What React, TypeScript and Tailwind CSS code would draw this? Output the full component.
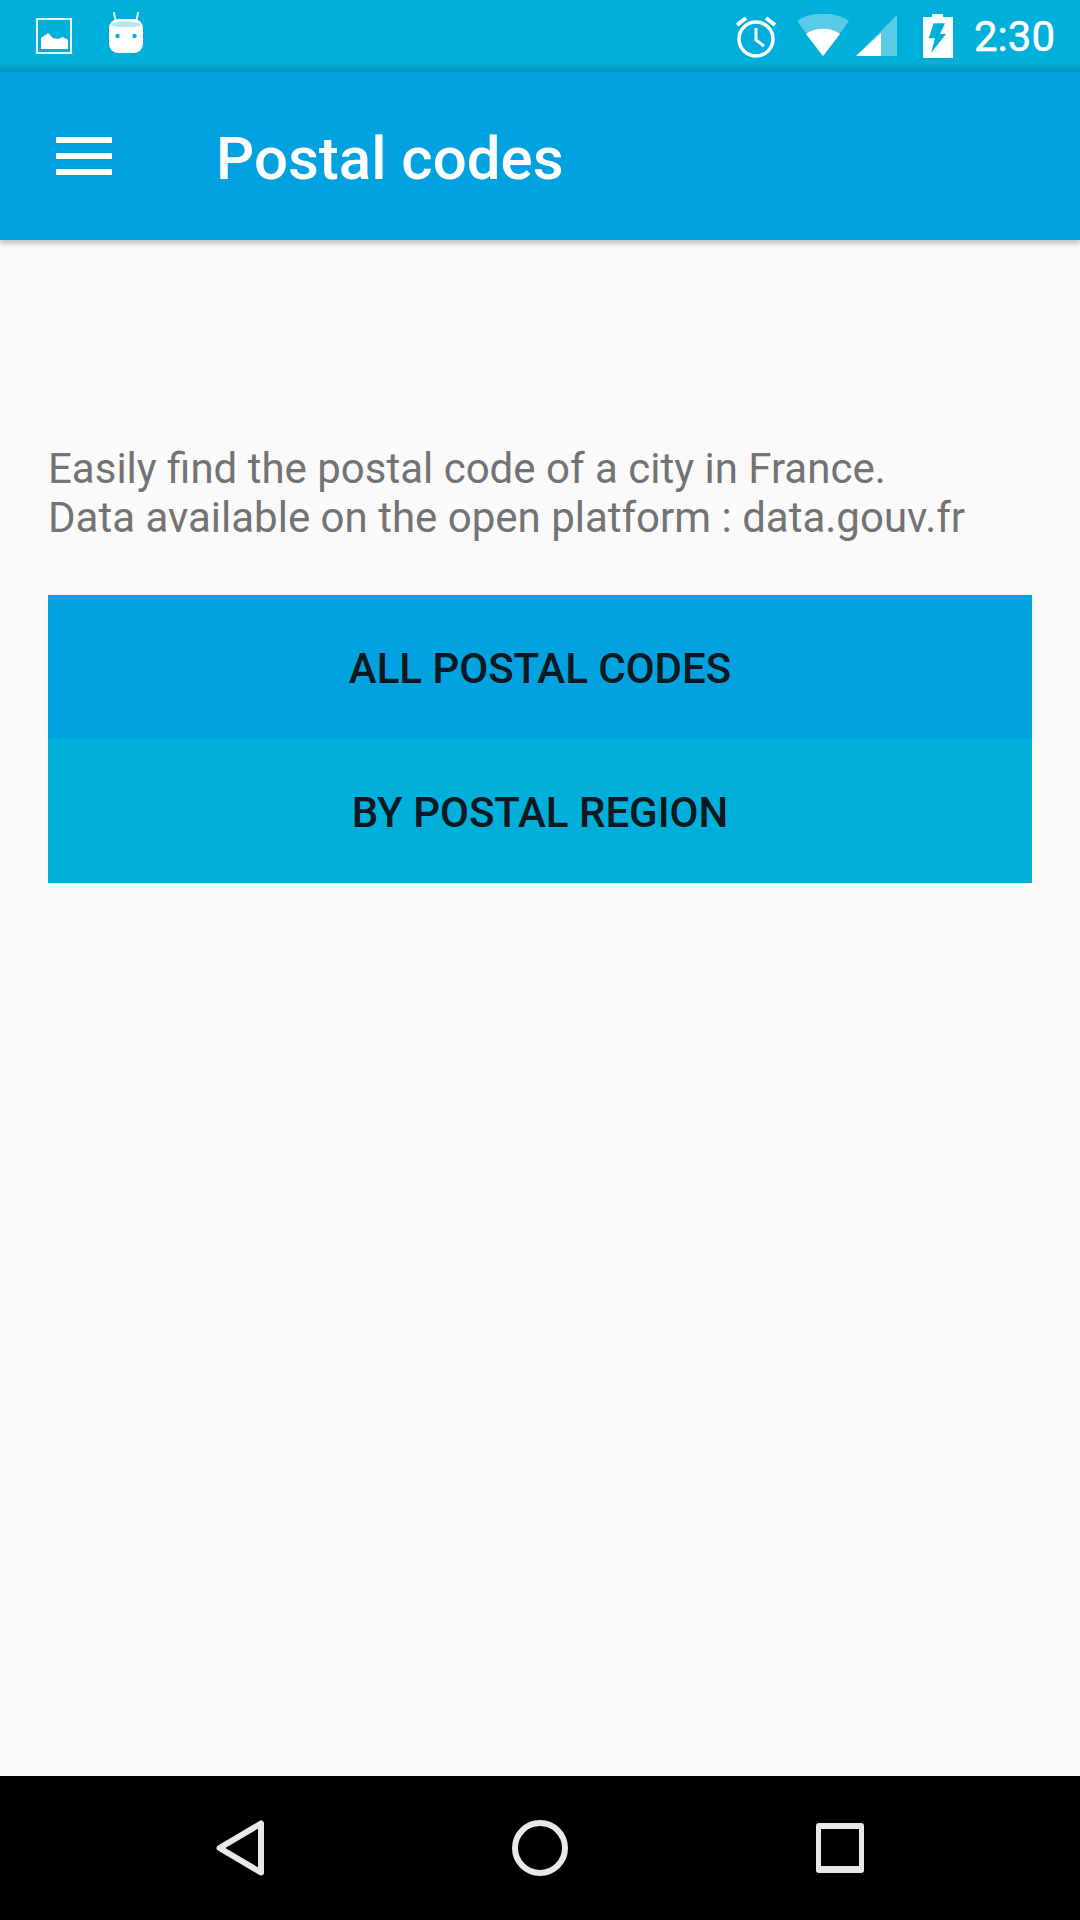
const roboto = "font-['Roboto',sans-serif]";

const StatusBar = () => (
  <div className="relative h-[72px] shrink-0 bg-[#00afda]">
    <div className="flex h-[72px] items-center justify-between pl-[36px] pr-[25px]">
      <div className="flex items-center gap-[36px]">
        <svg width="36" height="36" viewBox="0 0 36 36" fill="none">
          <rect x="1" y="1" width="34" height="34" stroke="#fff" strokeWidth="2" opacity="0.9" />
          <path d="M5 31V20l7-5 5 5 5 1 5-2 5 3v9z" fill="#fff" />
        </svg>
        <svg width="36" height="42" viewBox="0 0 36 42" className="-mt-[6px]">
          <path d="M8 10 6 1M28 10l2-9" stroke="#dff3f8" strokeWidth="2" strokeLinecap="round" />
          <rect x="1" y="7" width="34" height="34" rx="9" fill="#fff" />
          <path d="M3 13c3-5 27-5 30 0-4 3-26 3-30 0z" fill="#b7e6f2" />
          <circle cx="9.500" cy="24" r="2.200" fill="#00afda" />
          <circle cx="26.500" cy="24" r="2.200" fill="#00afda" />
        </svg>
      </div>
      <div className="flex items-center">
        <svg width="44" height="44" viewBox="0 0 44 44" fill="none" stroke="#fff" className="mr-[19px]">
          <circle cx="22" cy="25" r="17" strokeWidth="3.500" />
          <path d="M22 14v12l8 6" strokeWidth="3" />
          <path d="M3 11 12 4M41 11l-9-7" strokeWidth="4" />
        </svg>
        <svg width="102" height="44" viewBox="0 0 102 44" className="mr-[24px]">
          <path d="M0 7C14-3 38-3 52 7L26 42z" fill="#fff" fillOpacity="0.35" />
          <path d="M9 20c9-7 25-7 34 0L26 42z" fill="#fff" />
          <path d="M59 42 100 1v41z" fill="#fff" fillOpacity="0.35" />
          <path d="M59 42 84 19v23z" fill="#fff" />
        </svg>
        <svg width="30" height="44" viewBox="0 0 30 44" className="mr-[21px]">
          <path d="M9 0h11v3h10v41H0V3h9z" fill="#fff" />
          <path d="M10.700 9.300H22L17 20h6L8 39l4-14.700H5.700z" fill="#00afda" />
        </svg>
        <span className={`${roboto} pt-[1px] text-[42px] leading-[44px] text-white [-webkit-text-stroke:0.5px_white]`}>2:30</span>
      </div>
    </div>
    <div className="absolute inset-x-0 bottom-0 h-[9px] bg-gradient-to-b from-transparent to-black/15" />
  </div>
);

const Toolbar = () => (
  <div className="flex h-[168px] shrink-0 items-center bg-[#02a1df] pl-[56px] shadow-[0_3px_6px_rgba(0,0,0,0.25)]">
    <div className="flex w-[160px] flex-col gap-[10px]">
      <div className="h-[6px] w-[56px] bg-white" />
      <div className="h-[6px] w-[56px] bg-white" />
      <div className="h-[6px] w-[56px] bg-white" />
    </div>
    <span className={`${roboto} pt-[5px] text-[60px] leading-none font-medium text-white`}>Postal codes</span>
  </div>
);

const NavBar = () => (
  <div className="flex h-[144px] shrink-0 items-center justify-center bg-black">
    <div className="flex w-[648px] items-center justify-between">
      <svg width="48" height="56" viewBox="0 0 48 56" fill="none" stroke="#e8e8e8" strokeWidth="6" strokeLinejoin="round">
        <path d="M45 3.500v49L3.500 28z" />
      </svg>
      <svg width="56" height="56" viewBox="0 0 56 56" fill="none" stroke="#e8e8e8" strokeWidth="6">
        <circle cx="28" cy="28" r="25" />
      </svg>
      <div className="h-[50px] w-[48px] rounded-[3px] border-x-[5px] border-t-[6px] border-b-[7px] border-[#e8e8e8]" />
    </div>
  </div>
);

export default function App() {
  return (
    <div className={`${roboto} flex h-[1920px] w-[1080px] flex-col overflow-hidden bg-[#fafafa]`}>
      <StatusBar />
      <Toolbar />
      <main className="flex-1 px-[48px] pt-[204px]">
        <p className="text-[42px] leading-[49px] text-[#737373]">
          Easily find the postal code of a city in France.
          <br />
          Data available on the open platform : data.gouv.fr
        </p>
        <button className="mt-[53px] block h-[144px] w-full bg-[#02a1df] pt-[2px] text-[42px] font-medium text-[#0d1820] shadow-[0_-1px_2px_rgba(0,0,0,0.06)]">
          ALL POSTAL CODES
        </button>
        <button className="block h-[144px] w-full bg-[#00afda] pt-[2px] text-[42px] font-medium text-[#0d1820]">
          BY POSTAL REGION
        </button>
      </main>
      <NavBar />
    </div>
  );
}
